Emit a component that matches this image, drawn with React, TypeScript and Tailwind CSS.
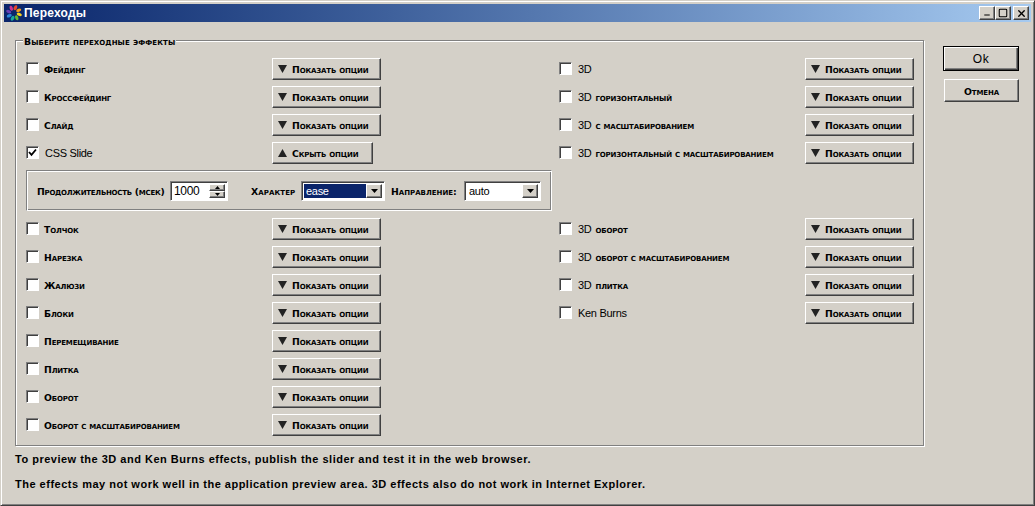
import React from 'react';
import { Minus, Square, X } from 'lucide-react';

const sysFont = "font-['Liberation_Sans',Arial,sans-serif]";
const capsBase = "font-['DejaVu_Sans',sans-serif] font-bold text-[9.3px] [font-variant:small-caps] text-black whitespace-nowrap";
const capsLabel = `${capsBase} tracking-[-0.15px]`;
const thinLabel = `${sysFont} text-[11px] tracking-[-0.3px] text-black whitespace-nowrap`;
const raised = 'border border-t-white border-l-white border-r-[#404040] border-b-[#404040] shadow-[inset_-1px_-1px_0_#808080] bg-[#d4d0c8]';
const sunken = 'border border-t-[#808080] border-l-[#808080] border-r-white border-b-white shadow-[inset_1px_1px_0_#404040]';

const Logo = () => {
  const colors = ['#e8452c', '#f49a1a', '#f7d21e', '#63b92f', '#18a99b', '#2b86dc', '#6a3fb5', '#d0328c'];
  return (
    <svg width="16" height="16" viewBox="0 0 16 16" className="shrink-0">
      {colors.map((c, i) => (
        <ellipse key={c} cx="9.4" cy="2.7" rx="1.6" ry="2.6" fill={c} transform={`rotate(${i * 45} 8 8) rotate(25 9.4 2.7)`} />
      ))}
    </svg>
  );
};

const Arrow = ({ up }: { up?: boolean }) => (
  <svg width="9" height="8" viewBox="0 0 9 8" className="shrink-0">
    <path d={up ? 'M4.5 0 L9 8 L0 8 Z' : 'M0 0 L9 0 L4.5 8 Z'} fill="#222" />
  </svg>
);

const OptionButton = ({ open }: { open?: boolean }) => (
  <button className={`${raised} h-[22px] flex items-center gap-[5px] pl-[5px] shrink-0 ${open ? 'w-[101px]' : 'w-[109px]'}`}>
    <Arrow up={open} />
    <span className={`${capsLabel} mt-[2px]`}>{open ? 'Скрыть опции' : 'Показать опции'}</span>
  </button>
);

const Checkbox = ({ checked }: { checked?: boolean }) => (
  <span className={`${sunken} w-[13px] h-[13px] bg-white shrink-0 flex items-center justify-center`}>
    {checked && (
      <svg width="9" height="9" viewBox="0 0 9 9">
        <path d="M1 4 L3.5 6.8 L8 1.5" fill="none" stroke="#000" strokeWidth="1.8" />
      </svg>
    )}
  </span>
);

// "3D" is drawn in the thin font, the rest of the label in the caps font
const EffectRow = ({ label, plain, checked, open }: { label?: string; plain?: string; checked?: boolean; open?: boolean }) => (
  <div className="flex items-center h-[22px]">
    <div className="w-[246px] flex items-center shrink-0 pb-[1px]">
      <Checkbox checked={checked} />
      {plain && <span className={`${thinLabel} ml-[6px] mt-[2px]`}>{plain}</span>}
      {label && <span className={`${capsLabel} mt-[2px] ${plain ? 'ml-[4px]' : 'ml-[5px]'}`}>{label}</span>}
    </div>
    <OptionButton open={open} />
  </div>
);

const Select = ({ value, selected, width }: { value: string; selected?: boolean; width: string }) => (
  <div className={`${sunken} ${width} h-[20px] bg-white flex items-center p-[2px]`}>
    <span className={`${thinLabel} flex-1 h-full leading-[14px] pl-[2px] ${selected ? 'bg-[#0a246a] text-white' : ''}`}>{value}</span>
    <span className={`${raised} w-[16px] h-full flex items-center justify-center`}>
      <svg width="7" height="4" viewBox="0 0 7 4"><path d="M0 0 H7 L3.5 4 Z" fill="#000" /></svg>
    </span>
  </div>
);

const Spinner = () => (
  <div className={`${sunken} w-[58px] h-[20px] bg-white flex items-center p-[2px]`}>
    <span className={`${sysFont} flex-1 text-[12px] tracking-[-0.3px] text-black pl-[1px] leading-none`}>1000</span>
    <span className="w-[16px] h-full flex flex-col">
      <span className={`${raised} flex-1 flex items-center justify-center`}>
        <svg width="5" height="3" viewBox="0 0 5 3"><path d="M2.5 0 L5 3 H0 Z" fill="#000" /></svg>
      </span>
      <span className={`${raised} flex-1 flex items-center justify-center`}>
        <svg width="5" height="3" viewBox="0 0 5 3"><path d="M0 0 H5 L2.5 3 Z" fill="#000" /></svg>
      </span>
    </span>
  </div>
);

const OptionsPanel = () => (
  <div className="h-[41px] w-[526px] mb-[1px] border border-t-[#808080] border-l-[#808080] border-r-white border-b-white shadow-[inset_1px_1px_0_#fff,inset_-1px_-1px_0_#808080] flex items-center pl-[10px]">
    <span className={`${capsBase} tracking-[-0.25px] w-[133px] mt-[2px]`}>Продолжительность (мсек)</span>
    <Spinner />
    <span className={`${capsBase} tracking-[0.1px] ml-[23px] w-[50px] mt-[2px]`}>Характер</span>
    <Select value="ease" selected width="w-[84px]" />
    <span className={`${capsBase} ml-[6px] w-[73px] mt-[2px]`}>Направление:</span>
    <Select value="auto" width="w-[77px]" />
  </div>
);

const TitleButton = ({ children }: { children: React.ReactNode }) => (
  <span className={`${raised} w-[16px] h-[14px] flex items-center justify-center`}>{children}</span>
);

const leftTop = ['Фейдинг', 'Кроссфейдинг', 'Слайд'];
const leftBottom = ['Толчок', 'Нарезка', 'Жалюзи', 'Блоки', 'Перемещивание', 'Плитка', 'Оборот', 'Оборот с масштабированием'];
const rightTop = ['', 'горизонтальный', 'с масштабированием', 'горизонтальный с масштабированием'];
const rightBottom = ['оборот', 'оборот с масштабированием', 'плитка'];

export default function App() {
  return (
    <div className="h-screen w-full bg-[#d4d0c8] flex flex-col p-[3px] border border-r-[#404040] border-b-[#404040] border-t-[#d4d0c8] border-l-[#d4d0c8] shadow-[inset_1px_1px_0_#fff,inset_-1px_-1px_0_#808080] overflow-hidden">
      {/* Title bar */}
      <div className="h-[18px] flex items-center bg-gradient-to-r from-[#0a246a] to-[#a6caf0] pl-[2px] pr-[2px] shrink-0">
        <Logo />
        <span className={`${sysFont} ml-[2px] font-bold text-[12px] tracking-[0.2px] text-white`}>Переходы</span>
        <div className="ml-auto flex items-center">
          <TitleButton><Minus size={8} strokeWidth={3} className="text-black mt-[4px]" /></TitleButton>
          <TitleButton><Square size={10} strokeWidth={2.5} className="text-black" /></TitleButton>
          <span className="w-[2px]" />
          <TitleButton><X size={11} strokeWidth={3} className="text-black" /></TitleButton>
        </div>
      </div>

      <div className="flex pl-[11px] pt-[18px] flex-1">
        <div className="w-[909px] shrink-0">
          {/* Group box */}
          <div className="relative h-[406px] border border-[#808080] shadow-[inset_1px_1px_0_#fff,1px_1px_0_#fff] pl-[10px] pt-[17px] flex">
            <span className={`${capsBase} tracking-[0.08px] absolute left-[7px] -top-[6px] bg-[#d4d0c8] px-[1px] leading-[13px]`}>Выберите переходные эффекты</span>
            <div className="w-[533px] flex flex-col gap-[6px] shrink-0">
              {leftTop.map((l) => <EffectRow key={l} label={l} />)}
              <EffectRow plain="CSS Slide" checked open />
              <OptionsPanel />
              {leftBottom.map((l) => <EffectRow key={l} label={l} />)}
            </div>
            <div className="flex flex-col gap-[6px]">
              {rightTop.map((l) => <EffectRow key={l} plain="3D" label={l} />)}
              <div className="h-[42px]" />
              {rightBottom.map((l) => <EffectRow key={l} plain="3D" label={l} />)}
              <EffectRow plain="Ken Burns" />
            </div>
          </div>

          {/* Notes */}
          <div className={`${sysFont} font-bold text-[11px] tracking-[0.5px] text-black pt-[7px] flex flex-col gap-[12px] leading-[13px]`}>
            <p>To preview the 3D and Ken Burns effects, publish the slider and test it in the web browser.</p>
            <p>The effects may not work well in the application preview area. 3D effects also do not work in Internet Explorer.</p>
          </div>
        </div>

        {/* Dialog buttons */}
        <div className="ml-[19px] pt-[6px] flex flex-col gap-[8px] w-[76px]">
          <button className="h-[25px] border border-black bg-[#d4d0c8] shadow-[inset_1px_1px_0_#fff,inset_-1px_-1px_0_#404040,inset_-2px_-2px_0_#808080] flex items-center justify-center">
            <span className={`${sysFont} text-[12px] tracking-[0.6px] text-black`}>Ok</span>
          </button>
          <button className={`${raised} ml-[1px] h-[23px] flex items-center justify-center`}>
            <span className={`${capsLabel} mt-[2px]`}>Отмена</span>
          </button>
        </div>
      </div>
    </div>
  );
}
